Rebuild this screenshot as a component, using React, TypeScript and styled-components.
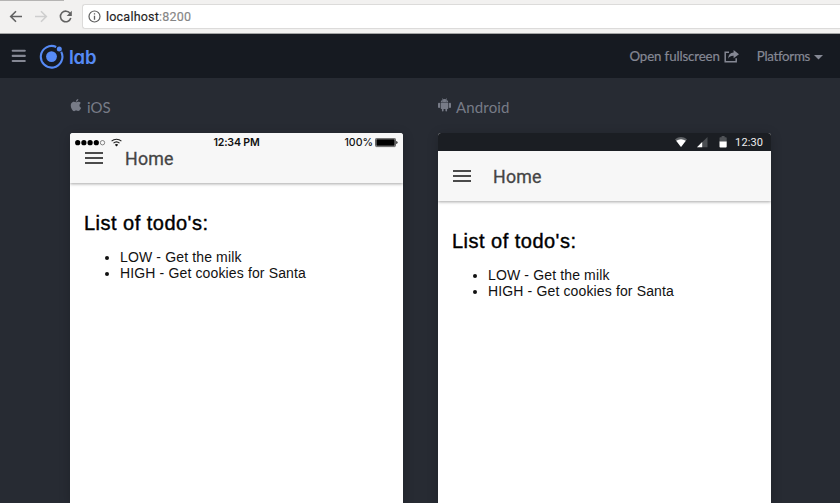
import React from 'react';
import styled, { createGlobalStyle } from 'styled-components';
import { IoLogoApple } from 'react-icons/io5';

const GlobalStyle = createGlobalStyle`
  * { box-sizing: border-box; }
  body { margin: 0; background: #272b33; overflow: hidden; }
`;

const Page = styled.div`
  width: 100%;
  height: 503px;
  overflow: hidden;
  display: flex;
  flex-direction: column;
  background: #272b33;
`;

const BrowserBar = styled.div`
  flex: none;
  height: 34px;
  display: flex;
  align-items: center;
  padding-left: 8px;
  background: linear-gradient(#b5b4b3, #b5b4b3) 0 0 / 64px 1px no-repeat #f2f1f0;
  border-bottom: 1px solid #a3a4a4;
`;

const NavIcons = styled.svg`
  flex: none;
  display: block;
  width: 74px;
  height: 33px;
`;

const AddressField = styled.div`
  flex: 1;
  height: 25px;
  display: flex;
  align-items: center;
  gap: 5px;
  padding-left: 5px;
  border: 1px solid #dcdbda;
  border-right: 0;
  border-radius: 3px 0 0 3px;
  background: #fff;
`;

const Address = styled.span`
  font: 12.5px/16px Roboto, sans-serif;
  letter-spacing: 0.22px;
  padding-top: 1px;
  color: #222;
  -webkit-text-stroke: 0.15px;
`;

const Port = styled.span`
  color: #858585;
`;

const Header = styled.header`
  flex: none;
  height: 44px;
  display: flex;
  align-items: center;
  padding: 0 17px 0 11px;
  background: #161a21;
`;

const Glyph = styled.svg`
  flex: none;
  display: block;
`;

const Brand = styled.span`
  margin-left: 5px;
  padding-top: 1px;
  font: 600 18.5px/24px Inter, sans-serif;
  font-feature-settings: 'cv11';
  letter-spacing: -0.25px;
  color: #568af5;
`;

const HeaderLinks = styled.nav`
  margin-left: auto;
  display: flex;
  align-items: center;
  color: #858894;
`;

const LinkLabel = styled.span<{ $gap: number; $spacing: number }>`
  font: 13.3px/18px Lato, sans-serif;
  letter-spacing: ${(p) => p.$spacing}px;
  margin-right: ${(p) => p.$gap}px;
  -webkit-text-stroke: 0.2px;
`;

const ShareGlyph = styled(Glyph)`
  margin-right: 18px;
`;

const Devices = styled.main`
  flex: 1;
  display: grid;
  grid-template-columns: 333px 333px;
  column-gap: 35px;
  padding: 19px 0 0 70px;
`;

const Device = styled.section`
  display: flex;
  flex-direction: column;
`;

const DeviceLabel = styled.div<{ $gap: number; $spacing: number }>`
  flex: none;
  height: 36px;
  display: flex;
  align-items: flex-start;
  gap: ${(p) => p.$gap}px;
  font: 15px/20px Lato, sans-serif;
  letter-spacing: ${(p) => p.$spacing}px;
  color: #777b87;
`;

const AppleGlyph = styled(IoLogoApple)`
  flex: none;
  width: 14px;
  height: 14px;
  margin: 1px 0 0 -1px;
`;

const AndroidGlyph = styled(Glyph)`
  margin-top: 1px;
`;

const Screen = styled.div`
  flex: 1;
  display: flex;
  flex-direction: column;
  overflow: hidden;
  border-radius: 3px 3px 0 0;
  background: #fff;
  box-shadow: 0 2px 12px rgba(0, 0, 0, 0.2);
`;

const IosStatus = styled.div`
  flex: none;
  height: 17px;
  display: grid;
  grid-template-columns: 1fr auto 1fr;
  align-items: center;
  padding: 2px 5px 0 5px;
  background: #f7f7f7;
  font: 500 10.6px/14px Inter, sans-serif;
  color: #111;
`;

const Clock = styled.span`
  font-weight: 600;
  letter-spacing: -0.18px;
`;

const Power = styled.span`
  display: flex;
  align-items: center;
  justify-content: flex-end;
  gap: 2px;
`;

const AndroidStatus = styled.div`
  flex: none;
  height: 18px;
  display: flex;
  align-items: center;
  justify-content: flex-end;
  gap: 7px;
  padding: 1px 8px 0 0;
  background: #1b1e23;
  font: 11px/14px Roboto, sans-serif;
  letter-spacing: 0.1px;
  color: #eee;
`;

const Toolbar = styled.div<{ $height: number; $lift: number }>`
  flex: none;
  height: ${(p) => p.$height}px;
  display: flex;
  align-items: center;
  gap: 22px;
  padding: 0 0 ${(p) => p.$lift}px 15px;
  background: #f7f7f7;
  clip-path: inset(0 0 -5px 0);
  box-shadow: 0 1px 3px rgba(0, 0, 0, 0.35);
`;

const ToolbarTitle = styled.span`
  padding-top: 2px;
  font: 17.8px/22px Roboto, sans-serif;
  letter-spacing: 0.2px;
  color: #454545;
  -webkit-text-stroke: 0.3px;
`;

const Content = styled.div`
  padding: 28px 14px;
  font: 14px/16px 'Liberation Sans', Arial, sans-serif;
  color: #111;
`;

const Heading = styled.h2`
  margin: 0;
  font-size: 20px;
  line-height: 24px;
  font-weight: 400;
  letter-spacing: 0.48px;
  color: #000;
  -webkit-text-stroke: 0.4px;
`;

const TodoList = styled.ul`
  margin: 14px 0 0;
  padding-left: 36px;
`;

const TodoItem = styled.li`
  letter-spacing: 0.14px;
`;

function MenuGlyph() {
  return (
    <Glyph width="18" height="14" viewBox="0 0 18 14" fill="#4b4b4b">
      <path d="M0 1h18v2H0zM0 6h18v2H0zM0 11h18v2H0z" />
    </Glyph>
  );
}

function Todos() {
  return (
    <Content>
      <Heading>List of todo's:</Heading>
      <TodoList>
        <TodoItem>LOW - Get the milk</TodoItem>
        <TodoItem>HIGH - Get cookies for Santa</TodoItem>
      </TodoList>
    </Content>
  );
}

export default function App() {
  return (
    <Page>
      <GlobalStyle />
      <BrowserBar>
        <NavIcons viewBox="8 0 74 33" fill="none" strokeWidth="1.6">
          <path stroke="#626262" d="M22 16.5H11M16 11.2 10.7 16.5 16 21.8" />
          <path stroke="#cecece" d="M35 16.5h11M41 11.2l5.3 5.3-5.3 5.3" />
          <path stroke="#626262" d="M70.2 13.6a5.3 5.3 0 1 0 .6 4.4" />
          <path fill="#626262" d="M71.8 10.8v5.1h-5.1z" />
        </NavIcons>
        <AddressField>
          <Glyph width="13" height="13" viewBox="0 0 13 13" fill="none" stroke="#5e5e5e">
            <circle cx="6.5" cy="6.5" r="5.5" strokeWidth="1.2" />
            <path d="M6.5 5.7v4M6.5 3.2v1.4" strokeWidth="1.3" />
          </Glyph>
          <Address>localhost<Port>:8200</Port></Address>
        </AddressField>
      </BrowserBar>
      <Header>
        <Glyph width="15" height="14" viewBox="0 0 15 14" stroke="#858894" strokeWidth="2.1" strokeLinecap="round">
          <path d="M1.7 1.8h12.1M1.7 6.9h12.1M1.7 12h12.1" />
        </Glyph>
        <Glyph width="38" height="26" viewBox="0 0 38 26" fill="none">
          <circle cx="25.5" cy="13.6" r="5.4" fill="#568af5" />
          <path d="M30.2 4A10.8 10.8 0 1 0 35.2 8.8" stroke="#568af5" strokeWidth="2.1" />
          <circle cx="33.3" cy="6" r="2.5" fill="#568af5" />
        </Glyph>
        <Brand>lab</Brand>
        <HeaderLinks>
          <LinkLabel $gap={4} $spacing={-0.13}>Open fullscreen</LinkLabel>
          <ShareGlyph width="15" height="13" viewBox="0 0 15 13" fill="none">
            <path d="M5 2.2H1.2v9.5h11V8.2" stroke="#858894" strokeWidth="1.5" />
            <path d="M9.6 0 15 4.2 9.6 8.3V5.8C7 5.7 5.4 6.6 4.2 8.7 4.3 5 6.1 2.8 9.6 2.6z" fill="#858894" />
          </ShareGlyph>
          <LinkLabel $gap={4} $spacing={-0.3}>Platforms</LinkLabel>
          <Glyph width="9" height="8" viewBox="0 0 9 8" fill="#858894">
            <path d="M0 3h9L4.5 7.6z" />
          </Glyph>
        </HeaderLinks>
      </Header>
      <Devices>
        <Device>
          <DeviceLabel $gap={4} $spacing={0.05}>
            <AppleGlyph />
            iOS
          </DeviceLabel>
          <Screen>
            <IosStatus>
              <Glyph width="50" height="10" viewBox="0 0 50 10">
                <g fill="#000">
                  <circle cx="2.7" cy="4.7" r="2.6" />
                  <circle cx="8.9" cy="4.7" r="2.6" />
                  <circle cx="15.1" cy="4.7" r="2.6" />
                  <circle cx="21.3" cy="4.7" r="2.6" />
                </g>
                <circle cx="27.5" cy="4.7" r="2.2" fill="none" stroke="#555" strokeWidth=".7" />
                <path d="M36.6 3.2a7.2 7.2 0 0 1 9.8 0M38.5 5.2a4.5 4.5 0 0 1 6 0" fill="none" stroke="#222" strokeWidth="1.1" />
                <path d="m39.8 6.7 1.7 1.8 1.7-1.8a2.6 2.6 0 0 0-3.4 0" fill="#111" />
              </Glyph>
              <Clock>12:34 PM</Clock>
              <Power>
                100%
                <Glyph width="23" height="10" viewBox="0 0 23 10">
                  <rect x=".5" y=".4" width="20" height="8.2" rx="1" fill="#fff" stroke="#222" strokeWidth=".7" />
                  <rect x="1.3" y="1.2" width="18.4" height="6.6" />
                  <path d="M21.3 3q1.2.4 1.2 1.5t-1.2 1.5z" />
                </Glyph>
              </Power>
            </IosStatus>
            <Toolbar $height={33} $lift={17}>
              <MenuGlyph />
              <ToolbarTitle>Home</ToolbarTitle>
            </Toolbar>
            <Todos />
          </Screen>
        </Device>
        <Device>
          <DeviceLabel $gap={5} $spacing={0.15}>
            <AndroidGlyph width="13" height="14" viewBox="0 0 13 14" fill="#777b87">
              <path d="M2.7 4.5C2.8 3 3.6 2 4.7 1.4L4 .3l.3-.2.8 1.1a4.5 4.5 0 0 1 2.8 0L8.7.1l.3.2-.7 1.1c1.1.6 1.9 1.6 2 3.1z" />
              <path d="M2.7 5h7.6v5.3q0 .8-.8.8h-.4v1.5a.8.8 0 0 1-1.7 0v-1.5H5.6v1.5a.8.8 0 0 1-1.7 0v-1.5h-.4q-.8 0-.8-.8z" />
              <rect x="0" y="4.7" width="2.1" height="5.2" rx="1" />
              <rect x="10.9" y="4.7" width="2.1" height="5.2" rx="1" />
              <g fill="#272b33">
                <circle cx="4.8" cy="3" r=".4" />
                <circle cx="8.2" cy="3" r=".4" />
              </g>
            </AndroidGlyph>
            Android
          </DeviceLabel>
          <Screen>
            <AndroidStatus>
              <Glyph width="53" height="13" viewBox="0 0 53 13">
                <path d="M0 3.3q6-4.6 12 0L6 11z" fill="#5e6165" />
                <path d="M1.2 4.7q4.8-3 9.6 0L6 11z" fill="#fff" />
                <path d="M22 11.3 32.5 1v10.3z" fill="#4b4e52" />
                <path d="M22 11.3l5.2-5.2v5.2z" fill="#fff" />
                <path d="M44.5 2q0-.8.8-.8h1.3V0h3v1.2h1.3q.8 0 .8.8v4h-7.2z" fill="#505357" />
                <path d="M44.5 5.5h7.2v5q0 .9-.9.9h-5.4q-.9 0-.9-.9z" fill="#fff" />
              </Glyph>
              12:30
            </AndroidStatus>
            <Toolbar $height={50} $lift={0}>
              <MenuGlyph />
              <ToolbarTitle>Home</ToolbarTitle>
            </Toolbar>
            <Todos />
          </Screen>
        </Device>
      </Devices>
    </Page>
  );
}
